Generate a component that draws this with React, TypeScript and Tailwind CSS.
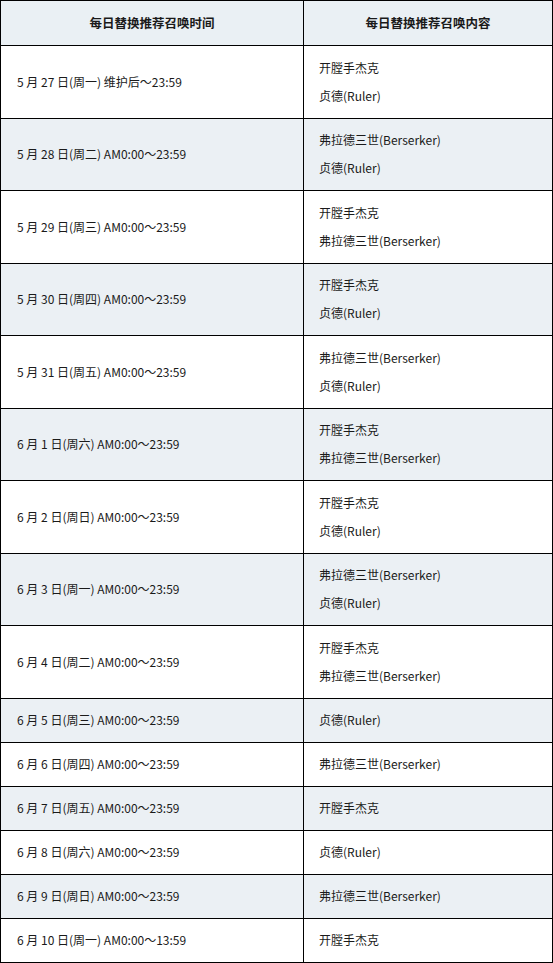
import React from 'react';

type Row = { time: string; items: string[] };

const JACK = '开膛手杰克';
const JEANNE = '贞德(Ruler)';
const VLAD = '弗拉德三世(Berserker)';

const rows: Row[] = [
  { time: '5 月 27 日(周一) 维护后～23:59', items: [JACK, JEANNE] },
  { time: '5 月 28 日(周二) AM0:00～23:59', items: [VLAD, JEANNE] },
  { time: '5 月 29 日(周三) AM0:00～23:59', items: [JACK, VLAD] },
  { time: '5 月 30 日(周四) AM0:00～23:59', items: [JACK, JEANNE] },
  { time: '5 月 31 日(周五) AM0:00～23:59', items: [VLAD, JEANNE] },
  { time: '6 月 1 日(周六) AM0:00～23:59', items: [JACK, VLAD] },
  { time: '6 月 2 日(周日) AM0:00～23:59', items: [JACK, JEANNE] },
  { time: '6 月 3 日(周一) AM0:00～23:59', items: [VLAD, JEANNE] },
  { time: '6 月 4 日(周二) AM0:00～23:59', items: [JACK, VLAD] },
  { time: '6 月 5 日(周三) AM0:00～23:59', items: [JEANNE] },
  { time: '6 月 6 日(周四) AM0:00～23:59', items: [VLAD] },
  { time: '6 月 7 日(周五) AM0:00～23:59', items: [JACK] },
  { time: '6 月 8 日(周六) AM0:00～23:59', items: [JEANNE] },
  { time: '6 月 9 日(周日) AM0:00～23:59', items: [VLAD] },
  { time: '6 月 10 日(周一) AM0:00～13:59', items: [JACK] },
];

const font = { fontFamily: '"Noto Sans CJK SC", "Liberation Sans", sans-serif' };

export default function App() {
  return (
    <div className="w-[553px] bg-white text-[12px] text-[#1a1a1a]" style={font}>
      <table className="w-[553px] border-collapse table-fixed">
        <colgroup>
          <col className="w-[303px]" />
          <col />
        </colgroup>
        <thead>
          <tr className="bg-[#eaf0f4]">
            <th className="border border-black p-0 font-bold text-[12.5px]">
              <div className="h-[44px] flex items-center justify-center">每日替换推荐召唤时间</div>
            </th>
            <th className="border border-black p-0 font-bold text-[12.5px]">
              <div className="h-[44px] flex items-center justify-center">每日替换推荐召唤内容</div>
            </th>
          </tr>
        </thead>
        <tbody>
          {rows.map((row, i) => {
            const h = row.items.length > 1 ? 'h-[71.5px]' : 'h-[43px]';
            return (
              <tr key={i} className={i % 2 === 1 ? 'bg-[#ebf0f4]' : 'bg-white'}>
                <td className="border border-black p-0 align-middle">
                  <div className={`${h} flex items-center pl-[16px]`}>{row.time}</div>
                </td>
                <td className="border border-black p-0 align-middle">
                  <div className={`${h} flex flex-col justify-center pl-[15px]`}>
                    {row.items.map((it, j) => (
                      <div key={j} className="leading-[28px]">{it}</div>
                    ))}
                  </div>
                </td>
              </tr>
            );
          })}
        </tbody>
      </table>
    </div>
  );
}
